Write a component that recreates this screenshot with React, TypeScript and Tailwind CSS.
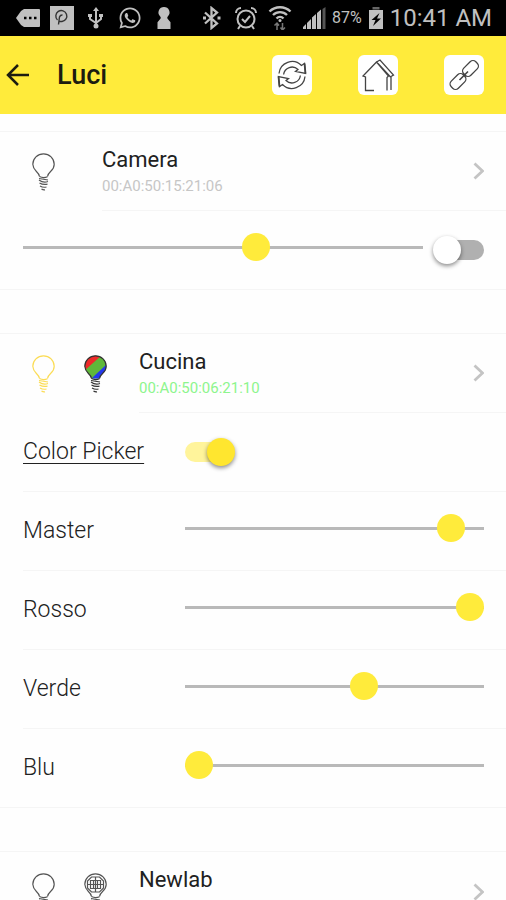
import type { ReactNode } from "react";
import { FaWhatsapp } from "react-icons/fa";

type BulbKind = "plain" | "yellow" | "rgb" | "grid";

const bulbOutline =
  "M7.500 23.500c-.3-2-1.400-3.400-3.300-5.200A10.600 10.600 0 0 1 .8 11.300C.8 5.400 5.600.8 11.500.8s10.700 4.600 10.700 10.500c0 2.900-1.300 5.200-3.400 7-1.900 1.800-3 3.200-3.300 5.200";

function Bulb({ kind }: { kind: BulbKind }) {
  const color = kind === "yellow" ? "#fbdc55" : kind === "rgb" ? "#333" : "#555";
  return (
    <svg className="h-[38px] w-[23px] shrink-0" viewBox="0 0 23 38" fill="none" stroke={color} strokeWidth="1.200" aria-hidden="true">
      {kind === "rgb" && (
        <>
          <clipPath id="glass">
            <path d={bulbOutline} />
          </clipPath>
          <g clipPath="url(#glass)" stroke="none">
            <path d="M0 0h23v24H0z" fill="#5fb83a" />
            <path d="M0 0h18L0 16z" fill="#ee2a2a" />
            <path d="M24 8v16H7z" fill="#2438ee" />
          </g>
        </>
      )}
      <path d={bulbOutline} />
      {kind === "grid" && (
        <path d="M7.500 4h8l4 4v7l-4 4h-8l-4-4V8zM11.500 4v15M3.500 11.500h16M6.500 7.500h10v8h-10zM9.500 7.500v8M13.500 7.500v8" />
      )}
      <path d="M7.500 23.500c2.500 1.300 5.500 1.300 8 .2M7 25.500l9 1.500M7 27c2 1.500 6 2.500 9 1.500M7.500 30c2.500 1.500 5 1.800 8 1.200M8 33c2 1.200 4.500 1.500 6.500 1M9.500 36c1.200.8 2.500 1 3.500.8" />
    </svg>
  );
}

function Chevron() {
  return (
    <svg className="h-[18px] w-[11px] shrink-0" viewBox="0 0 11 18" fill="none" stroke="#c4c4c4" strokeWidth="2.800" aria-hidden="true">
      <path d="M1.500 1.500L9.500 9l-8 7.500" />
    </svg>
  );
}

function Slider({ id, label, value }: { id: string; label?: string; value: number }) {
  return (
    <input
      id={id}
      type="range"
      aria-label={label}
      defaultValue={value}
      className="mb-1.5 h-7 min-w-0 flex-1 appearance-none bg-transparent [&::-webkit-slider-runnable-track]:h-[3px] [&::-webkit-slider-runnable-track]:bg-[#b9b9b9] [&::-webkit-slider-thumb]:-mt-[13px] [&::-webkit-slider-thumb]:size-7 [&::-webkit-slider-thumb]:appearance-none [&::-webkit-slider-thumb]:rounded-full [&::-webkit-slider-thumb]:bg-[#ffeb3b]"
    />
  );
}

function Switch({ id, label, on }: { id: string; label?: string; on?: boolean }) {
  return (
    <input
      id={id}
      type="checkbox"
      role="switch"
      aria-label={label}
      defaultChecked={on}
      className="flex h-5 w-[37px] shrink-0 appearance-none items-center rounded-full bg-[#b0b0b0] before:-ml-3.5 before:size-7 before:shrink-0 before:rounded-full before:bg-white before:shadow-[0_2px_4px_rgba(0,0,0,0.45)] checked:bg-[#fff49b] checked:before:ml-[22px] checked:before:bg-[#ffe62f]"
    />
  );
}

function Card({ children }: { children: ReactNode }) {
  return <section className="border-y border-[#f5f5f5]">{children}</section>;
}

function DeviceRow({ name, address, bulbs, online, last }: { name: string; address?: string; bulbs: BulbKind[]; online?: boolean; last?: boolean }) {
  return (
    <button type="button" className="flex h-[79px] w-full items-stretch text-left">
      <span className="flex min-w-[102px] items-center gap-[29px] px-8">
        {bulbs.map((kind) => (
          <Bulb key={kind} kind={kind} />
        ))}
      </span>
      <span className={`flex flex-1 items-center justify-between pr-[22px] ${last ? "" : "border-b border-[#f5f5f5]"}`}>
        <span className="flex flex-col gap-1 self-start pt-4">
          <span className="text-[22px] leading-6 text-[#212121]">{name}</span>
          {address && <span className={`text-[15px] leading-5 ${online ? "text-[#8df58d]" : "text-[#c6c6c6]"}`}>{address}</span>}
        </span>
        <Chevron />
      </span>
    </button>
  );
}

function ControlRow({ id, label, underline, last, children }: { id: string; label: string; underline?: boolean; last?: boolean; children: ReactNode }) {
  return (
    <div className="pl-[23px]">
      <div className={`flex items-center pr-[22px] ${last ? "h-[78px]" : "h-[79px] border-b border-[#f5f5f5]"}`}>
        <label htmlFor={id} className="w-[162px] shrink-0 text-[23px] leading-6 font-light text-[#212121]">
          <span className={underline ? "underline decoration-1 underline-offset-4" : ""}>{label}</span>
        </label>
        {children}
      </div>
    </div>
  );
}

function HeaderButton({ label, children }: { label: string; children: ReactNode }) {
  return (
    <button type="button" aria-label={label} className="flex size-10 items-center justify-center rounded-md bg-white">
      <svg className="size-[34px]" viewBox="0 0 34 34" fill="none" stroke="#444" strokeWidth="1.300">
        {children}
      </svg>
    </button>
  );
}

function StatusIcon({ children }: { children: ReactNode }) {
  return (
    <svg className="size-6 shrink-0" viewBox="0 0 24 24" fill="none" stroke="currentColor" strokeWidth="2" aria-hidden="true">
      {children}
    </svg>
  );
}

function StatusBar() {
  return (
    <div className="flex h-9 shrink-0 items-center justify-between bg-black pr-3.5 pl-4 text-[#c0c0c0]">
      <div className="flex items-center gap-2.5">
        <StatusIcon>
          <path d="M8 3h15a1 1 0 0 1 1 1v16a1 1 0 0 1-1 1H8l-3-2-5-7 5-7z" fill="currentColor" stroke="none" />
          <path d="M8 12h2.500M13 12h2.500M18 12h2.500" stroke="#000" strokeWidth="2.500" />
        </StatusIcon>
        <StatusIcon>
          <path d="M0 0h24v24H0z" fill="currentColor" stroke="none" />
          <path d="M7.500 14A5.500 5.500 0 1 1 12 15.500H9.500M8.500 18.500l1-7.500a3 3 0 0 1 3-2" stroke="#333" strokeWidth="1.400" />
        </StatusIcon>
        <StatusIcon>
          <path d="M12 4v15M6 9v4l6 4 5-4V9" />
          <path d="M12 1l3 4H9zM4 8h4v3H4zM15 8h4v3h-4z" fill="currentColor" stroke="none" />
          <circle cx="12" cy="20" r="2.500" fill="currentColor" stroke="none" />
        </StatusIcon>
        <FaWhatsapp className="size-6" aria-hidden="true" />
        <StatusIcon>
          <path d="M12 1a5.500 5.500 0 0 1 4 9.300c-1 1-1 2 0 3l2.500 3V23h-13v-6.700l2.500-3c1-1 1-2 0-3A5.500 5.500 0 0 1 12 1z" fill="currentColor" stroke="none" />
        </StatusIcon>
      </div>
      <div className="flex items-center gap-1.5">
        <div className="flex items-center gap-2.5">
          <StatusIcon>
            <path d="M5 6.500l12 11-5.500 4.500V2l5.500 4.500-12 11" strokeWidth="2.300" />
            <path d="M3 10.500h3v3H3zM17.500 10.500h3v3h-3z" fill="currentColor" stroke="none" />
          </StatusIcon>
          <StatusIcon>
            <circle cx="12" cy="13" r="8.500" />
            <path d="M8 13l3 3 5-6M2 7a5 5 0 0 1 5-5M22 7a5 5 0 0 0-5-5M6 20l-2 3M18 20l2 3" />
          </StatusIcon>
          <StatusIcon>
            <path d="M1.500 5.500a15 15 0 0 1 21 0M5 9a10 10 0 0 1 14 0M8.500 12.500a5 5 0 0 1 7 0" strokeWidth="2.400" />
            <circle cx="12" cy="14.500" r="1.500" fill="currentColor" stroke="none" />
            <path d="M9 17v7M6.500 19.500L9 17l2 2.500M14.500 17v7M12.500 21.500l2 2.500 2.500-2.500" stroke="#777" strokeWidth="1.500" />
          </StatusIcon>
          <StatusIcon>
            <path d="M1 23v-2l3-3v5zM5 23v-6L9 13v10zM10 23V11.500L14 8v15zM15 23V7L19 3.500V23z" fill="currentColor" stroke="none" />
            <path d="M20.500 23V3L23.500 1v22z" fill="#555" stroke="none" />
          </StatusIcon>
        </div>
        <span className="text-[16px] leading-5">87%</span>
        <svg className="h-6 w-4 shrink-0" viewBox="0 0 16 24" aria-hidden="true">
          <path d="M4.500 1h7v2.500H4.500z" fill="#666" />
          <path d="M1 4h14v19H1z" fill="currentColor" />
          <path d="M11.500 7L3.500 14h4l-2.500 6 8-7.500H9z" fill="#000" />
        </svg>
        <span className="text-[24px] leading-8">10:41 AM</span>
      </div>
    </div>
  );
}

export default function App() {
  return (
    <div className="flex h-screen flex-col bg-[#fefefe] font-[Roboto,sans-serif]">
      <StatusBar />
      <header className="flex h-[78px] shrink-0 items-center justify-between bg-[#ffeb3b] pr-[22px] pl-1.5">
        <div className="flex items-center gap-7">
          <button type="button" aria-label="Back">
            <svg className="h-[22px] w-[23px]" viewBox="0 0 23 22" fill="none" stroke="#1c1c10" strokeWidth="2.500">
              <path d="M12 1L2 11l10 10M2 11h21" />
            </svg>
          </button>
          <h1 className="text-[27px] leading-8 font-medium text-[#1c1c10]">Luci</h1>
        </div>
        <nav className="flex gap-[46px]">
          <HeaderButton label="Refresh">
            <path d="M4 15.500A13.200 13.200 0 0 1 26.500 7.500L29.500 5.500 30.500 15.500 20.500 13.500 23 11.500A8.500 8.500 0 0 0 8.600 16.500M30 18.500A13.200 13.200 0 0 1 7.500 26.500L4.500 28.500 3.500 18.500 13.500 20.500 11 22.500A8.500 8.500 0 0 0 25.400 17.500" />
            <path d="M29.500 5.500l1 10M4.500 28.500l-1-10" strokeWidth="1.800" />
          </HeaderButton>
          <HeaderButton label="Home">
            <path d="M13 32.500H4.500V19L2 18 15.500 4 27.500 18 26 19.500v13M15.500 4l3.500-2 13.500 15-2.500 1.500V32M17 5.500L29.500 19" />
          </HeaderButton>
          <HeaderButton label="Link">
            <rect x="15" y="5.500" width="17" height="10" rx="4" transform="rotate(-45 23.500 10.500)" />
            <rect x="2.500" y="18.500" width="17" height="10" rx="4" transform="rotate(-45 11 23.500)" />
            <path d="M12.500 22l8.500-8.500M16 15.500l3 3" strokeWidth="1.600" />
          </HeaderButton>
        </nav>
      </header>
      <main className="flex min-h-0 flex-1 flex-col gap-[43px] overflow-y-auto pt-[17px] [scrollbar-width:none] [&>*]:shrink-0">
        <Card>
          <DeviceRow name="Camera" address="00:A0:50:15:21:06" bulbs={["plain"]} />
          <div className="flex h-[78px] items-center gap-6 pr-[22px] pl-[23px]">
            <Slider id="camera-level" label="Camera" value={59} />
            <Switch id="camera-power" label="Camera" />
          </div>
        </Card>
        <Card>
          <DeviceRow name="Cucina" address="00:A0:50:06:21:10" bulbs={["yellow", "rgb"]} online />
          <ControlRow id="picker" label="Color Picker" underline>
            <Switch id="picker" on />
          </ControlRow>
          <ControlRow id="master" label="Master">
            <Slider id="master" value={93} />
          </ControlRow>
          <ControlRow id="rosso" label="Rosso">
            <Slider id="rosso" value={100} />
          </ControlRow>
          <ControlRow id="verde" label="Verde">
            <Slider id="verde" value={61} />
          </ControlRow>
          <ControlRow id="blu" label="Blu" last>
            <Slider id="blu" value={0} />
          </ControlRow>
        </Card>
        <Card>
          <DeviceRow name="Newlab" bulbs={["plain", "grid"]} last />
        </Card>
      </main>
    </div>
  );
}
